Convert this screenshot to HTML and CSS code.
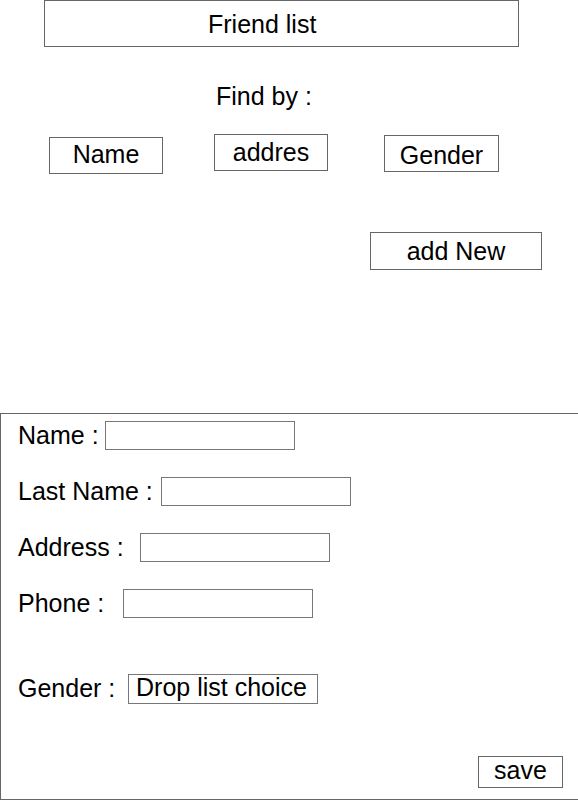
FILE: index.html
```html
<!DOCTYPE html>
<html>
<head>
<meta charset="utf-8">
<title>Friend list</title>
<link rel="stylesheet" href="styles.css">
</head>
<body>
<div class="page">
  <div class="header">Friend list</div>
  <div class="find-label">Find by :</div>
  <div class="find-row">
    <div class="btn btn-name">Name</div>
    <div class="btn btn-addr">addres</div>
    <div class="btn btn-gender">Gender</div>
  </div>
  <div class="btn-add">add New</div>
  <form class="form">
    <div class="row"><span class="label w-name">Name :</span><span class="field"></span></div>
    <div class="row"><span class="label w-last">Last Name :</span><span class="field"></span></div>
    <div class="row"><span class="label w-addr">Address :</span><span class="field"></span></div>
    <div class="row"><span class="label w-phone">Phone :</span><span class="field"></span></div>
    <div class="row row-gender"><span class="label w-gender">Gender :</span><span class="drop">Drop list choice</span></div>
    <div class="save">save</div>
  </form>
</div>
</body>
</html>
```
FILE: styles.css
```css
* { box-sizing: border-box; }
html, body { margin: 0; padding: 0; background: #fff; }
body {
  font-family: "Liberation Sans", Arial, sans-serif;
  font-size: 25px;
  line-height: 28px;
  color: #000;
  width: 578px;
  height: 800px;
  overflow: hidden;
}
.header {
  margin-left: 44px;
  width: 475px;
  height: 47px;
  border: 1px solid #666;
  padding: 9px 0 0 163px;
}
.find-label {
  margin-top: 35px;
  padding-left: 216px;
}
.find-row {
  display: flex;
  align-items: flex-start;
  margin-top: 24px;
  padding-left: 49px;
}
.btn {
  height: 37px;
  border: 1px solid #666;
  text-align: center;
  padding-top: 2px;
}
.btn-name { width: 114px; margin-top: 3px; }
.btn-addr { width: 114px; margin-left: 51px; padding-top: 3px; }
.btn-gender { width: 115px; margin-left: 56px; margin-top: 1px; padding-top: 5px; }
.btn-add {
  margin-left: 370px;
  margin-top: 58px;
  width: 172px;
  height: 38px;
  border: 1px solid #666;
  text-align: center;
  padding-top: 4px;
}
.form {
  margin: 143px 0 0 0;
  height: 387px;
  width: 578px;
  border: 1px solid #666;
  border-right: none;
  padding: 7px 0 11px 17px;
  display: flex;
  flex-direction: column;
  gap: 27px;
}
.row {
  display: flex;
  align-items: flex-start;
  height: 29px;
}
.row-gender { margin-top: 29px; }
.label {
  white-space: nowrap;
}
.w-name { width: 87px; }
.w-last { width: 143px; }
.w-addr { width: 122px; }
.w-phone { width: 105px; }
.w-gender { width: 110px; }
.field {
  width: 190px;
  height: 29px;
  border: 1px solid #777;
}
.drop {
  width: 190px;
  height: 30px;
  border: 1px solid #777;
  line-height: 24px;
  padding-left: 7px;
  white-space: nowrap;
}
.save {
  margin-top: auto;
  align-self: flex-end;
  margin-right: 15px;
  width: 85px;
  height: 32px;
  border: 1px solid #666;
  line-height: 26px;
  text-align: center;
}
```
